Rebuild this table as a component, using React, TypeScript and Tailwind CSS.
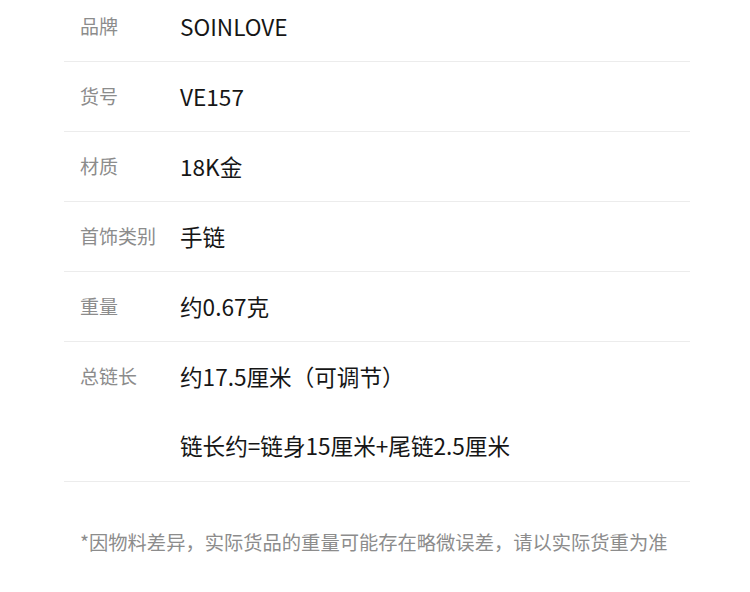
import React from 'react';

const rows = [
  { label: '品牌', value: 'SOINLOVE' },
  { label: '货号', value: 'VE157' },
  { label: '材质', value: '18K金' },
  { label: '首饰类别', value: '手链' },
  { label: '重量', value: '约0.67克' },
];

export default function App() {
  return (
    <div
      className="w-[750px] h-[592px] bg-white overflow-hidden"
      style={{ fontFamily: '"Noto Sans CJK SC", "Noto Sans", sans-serif' }}
    >
      <div className="w-[626px] ml-[64px] mt-[-8px]">
        {rows.map((row) => (
          <div key={row.label} className="h-[70px] flex items-center border-b-[1.5px] border-[#ececec]">
            <div className="w-[116px] pl-[16px] text-[19px] text-[#8c8c8c]">{row.label}</div>
            <div className="text-[22.6px] text-[#161616]">{row.value}</div>
          </div>
        ))}

        {/* 总链长 */}
        <div className="border-b-[1.5px] border-[#ececec]">
          <div className="h-[69px] flex items-center">
            <div className="w-[116px] pl-[16px] text-[19px] text-[#8c8c8c]">总链长</div>
            <div className="text-[22.6px] text-[#161616]">约17.5厘米（可调节）</div>
          </div>
          <div className="h-[70px] flex items-center">
            <div className="w-[116px]" />
            <div className="text-[22.6px] text-[#161616]">链长约=链身15厘米+尾链2.5厘米</div>
          </div>
        </div>

        <div className="h-[120px] flex items-center pl-[16px] text-[19.3px] text-[#8c8c8c]">
          *因物料差异，实际货品的重量可能存在略微误差，请以实际货重为准
        </div>
      </div>
    </div>
  );
}
